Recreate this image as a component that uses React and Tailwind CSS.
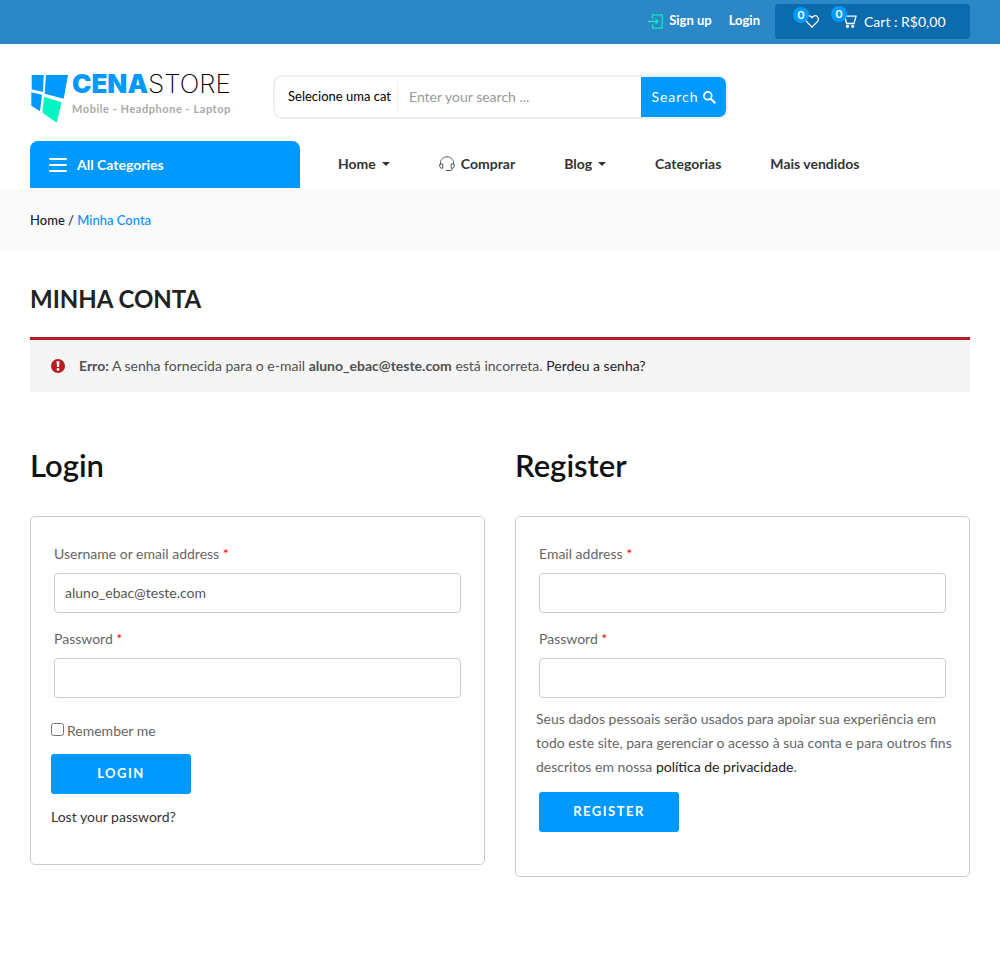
import { useState } from "react";

function LoginIcon() {
  return (
    <svg width="15" height="15" viewBox="0 0 15 15" fill="none" stroke="#14e6c0" strokeWidth="1.3" aria-hidden="true">
      <path d="M4.5 4.5V.8h9.7v13.4H4.5v-3.7" />
      <path d="M0 7.5h10M7.5 5l2.5 2.5L7.5 10" />
    </svg>
  );
}

function HeartIcon() {
  return (
    <svg width="14" height="13" viewBox="0 0 14 13" fill="none" stroke="white" strokeWidth="1.3" aria-hidden="true">
      <path d="M7 12 1.6 6.6C.2 5 .5 2.700 1.800 1.500 3.300.2 5.700.5 7 2.700 8.300.5 10.700.2 12.200 1.500c1.300 1.200 1.600 3.500.2 5.100Z" />
    </svg>
  );
}

function CartIcon() {
  return (
    <svg width="14" height="14" viewBox="0 0 14 14" fill="none" stroke="white" strokeWidth="1.3" aria-hidden="true">
      <path d="M2.500 2.200H13L11 9.500H3.500L1.500 1" />
      <circle cx="4.500" cy="12.300" r="1" fill="white" />
      <circle cx="9.700" cy="12.300" r="1" fill="white" />
    </svg>
  );
}

function HeadsetIcon() {
  return (
    <svg width="16" height="16" viewBox="0 0 16 16" fill="none" stroke="#444" strokeWidth=".9" aria-hidden="true">
      <path d="M1.500 8V6.800C1.500 3.500 4.300.8 8 .8s6.500 2.700 6.500 6V8" />
      <path d="M.8 8h3v4.200H2L.8 11ZM15.200 8h-3v4.200H14l1.200-1.200Z" />
      <path d="M13.500 12.500c0 1.300-.9 1.800-2.500 2M7 14.500h4" />
    </svg>
  );
}

function SearchIcon() {
  return (
    <svg width="13" height="13" viewBox="0 0 13 13" fill="none" stroke="white" strokeWidth="1.700" className="mt-[2px]" aria-hidden="true">
      <circle cx="4.800" cy="4.800" r="3.900" />
      <path d="m7.800 7.800 4.500 4.500" strokeWidth="2" />
    </svg>
  );
}

function Caret() {
  return (
    <svg width="8" height="4" viewBox="0 0 8 4" aria-hidden="true">
      <path d="M0 0h8L4 4Z" fill="#333" />
    </svg>
  );
}

function Badge({ children }) {
  return (
    <span className="absolute -top-2 -left-3 flex size-4 items-center justify-center rounded-full bg-[#0099ff] text-[12px] leading-4 font-bold text-white">
      {children}
    </span>
  );
}

function Logo() {
  return (
    <a href="#home" className="flex w-[243px] shrink-0 items-start gap-1">
      <svg width="38" height="49" viewBox="0 0 38 49" className="shrink-0" aria-hidden="true">
        <path d="M1.700 0H13.700L13 17 1.700 14.300Z" fill="#0099ff" />
        <path d="M16 0H38L33.700 23.700 14.700 18.700Z" fill="#0099ff" />
        <path d="M1.300 17.300 12 19.700 10 36.300 1.300 30.700Z" fill="#0099ff" />
        <path d="M14 21.700 31.500 27.300 26.700 47.700 12.500 37.700Z" fill="#00f5c0" />
      </svg>
      <span className="block">
        <span className="block font-['Inter',sans-serif] text-[26px] leading-[18px] text-black">
          <span className="font-black text-[#0099ff]">CENA</span>
          <span className="font-extralight">STORE</span>
        </span>
        <span className="mt-2 block text-[11px] leading-4 font-bold tracking-wider whitespace-nowrap text-[#aaa]">
          Mobile - Headphone - Laptop
        </span>
      </span>
    </a>
  );
}

function Field({ id, label, type, defaultValue }) {
  return (
    <div className="px-[3px]">
      <label htmlFor={id} className="block leading-6">
        {label} <span className="text-[#ff0000]">*</span>
      </label>
      <input
        id={id}
        type={type}
        defaultValue={defaultValue}
        className="mt-[7px] block h-10 w-full rounded-[4px] border border-[#ccc] bg-white px-[10px] pb-[2px] text-[#555] outline-none focus:border-[#0099ff]"
      />
    </div>
  );
}

const buttonClass =
  "h-10 w-[140px] rounded-[3px] bg-[#0099ff] text-[13px] font-bold tracking-[1.5px] text-white uppercase";

const navItems = [
  { label: "Home", caret: true },
  { label: "Comprar", icon: true },
  { label: "Blog", caret: true },
  { label: "Categorias" },
  { label: "Mais vendidos" },
];

export default function App() {
  const [remember, setRemember] = useState(false);
  const stop = (event) => event.preventDefault();

  return (
    <div className="min-h-screen bg-white font-['Lato',sans-serif] text-[14px] text-[#666]">
      <div className="bg-[#2b87c5]">
        <div className="mx-auto flex h-11 max-w-[1200px] items-center justify-end px-[30px] pb-[2px] text-[13px] font-bold text-white">
          <a href="#signup" className="flex items-center gap-[6px]">
            <LoginIcon />
            Sign up
          </a>
          <a href="#login" className="ml-[17px]">Login</a>
          <div className="ml-[15px] flex h-[35px] w-[195px] items-center rounded-[4px] bg-[#0b6bad] pl-[30px] text-[14px]">
            <a href="#wishlist" aria-label="Wishlist" className="relative">
              <HeartIcon />
              <Badge>0</Badge>
            </a>
            <a href="#cart" className="ml-[24px] flex items-center gap-[7px] font-normal">
              <span className="relative">
                <CartIcon />
                <Badge>0</Badge>
              </span>
              <span>Cart : R$0,00</span>
            </a>
          </div>
        </div>
      </div>

      <header className="mx-auto max-w-[1200px] px-[30px] pt-[31px] pb-px">
        <div className="flex items-start">
          <Logo />
          <form onSubmit={stop} className="flex h-[44px] w-full max-w-[455px] overflow-hidden rounded-[9px] border-2 border-[#eee]">
            <select
              aria-label="Category"
              className="my-1 w-[123px] shrink-0 appearance-none overflow-hidden border-r border-[#eee] bg-white pl-[13px] text-[13px] text-black outline-none"
            >
              <option>Selecione uma cat</option>
            </select>
            <input
              aria-label="Search"
              placeholder="Enter your search ..."
              className="min-w-0 flex-1 px-[11px] pb-[2px] outline-none placeholder:text-[#999]"
            />
            <button type="submit" className="flex w-[85px] shrink-0 items-center justify-center gap-1 bg-[#0099ff] pb-[2px] tracking-[1px] text-white">
              Search <SearchIcon />
            </button>
          </form>
        </div>
        <div className="mt-[17px] flex h-[47px] items-stretch">
          <button type="button" className="flex w-[270px] shrink-0 items-center gap-[10px] rounded-t-[8px] bg-[#0099ff] pl-[19px] font-bold text-white">
            <svg width="18" height="14" viewBox="0 0 18 14" stroke="white" strokeWidth="2" strokeLinecap="round" aria-hidden="true">
              <path d="M1 1h16M1 7h16M1 13h16" />
            </svg>
            All Categories
          </button>
          <nav className="ml-[38px] flex items-center gap-[49px] pb-[2px] font-bold text-[#333]">
            {navItems.map((item) => (
              <a key={item.label} href={`#${item.label}`} className="flex items-center gap-[6px] whitespace-nowrap">
                {item.icon && <HeadsetIcon />}
                {item.label}
                {item.caret && <Caret />}
              </a>
            ))}
          </nav>
        </div>
      </header>

      <div className="bg-[#fafafa]">
        <nav aria-label="Breadcrumb" className="mx-auto max-w-[1200px] px-[30px] py-[21px] text-[13px] leading-5 font-medium text-[#222]">
          <a href="#home">Home</a> / <span className="text-[#0a8fff]">Minha Conta</span>
        </nav>
      </div>

      <main className="mx-auto max-w-[1200px] px-[30px] pb-[78px]">
        <h1 className="pt-8 text-[24px] leading-8 font-bold text-[#222] uppercase">Minha Conta</h1>

        <div role="alert" className="mt-[22px] flex items-center gap-[14px] border-t-[3px] border-[#b81c23] bg-[#f5f5f5] px-[21px] py-[14px] leading-6 text-[#515151]">
          <svg width="14" height="14" viewBox="0 0 14 14" className="shrink-0" aria-hidden="true">
            <circle cx="7" cy="7" r="7" fill="#b81c23" />
            <path d="M5.500 2.200h3l-.5 5.800H6Z" fill="white" />
            <circle cx="7" cy="10.400" r="1.400" fill="white" />
          </svg>
          <p>
            <strong>Erro:</strong> A senha fornecida para o e-mail <strong>aluno_ebac@teste.com</strong> está incorreta.{" "}
            <a href="#recover" className="text-[#222]">Perdeu a senha?</a>
          </p>
        </div>

        <div className="mt-[53px] grid grid-cols-2 items-start gap-[30px]">
          <section>
            <h2 className="text-[31px] leading-10 font-semibold text-[#111]">Login</h2>
            <form onSubmit={stop} className="mt-[31px] rounded-[5px] border border-[#ccc] px-5 pt-[25px] pb-[35px]">
              <Field id="username" label="Username or email address" type="text" defaultValue="aluno_ebac@teste.com" />
              <div className="mt-[14px]">
                <Field id="login-password" label="Password" type="password" />
              </div>
              <label className="mt-[21px] flex items-center gap-[3px] leading-6">
                <input type="checkbox" checked={remember} onChange={(event) => setRemember(event.target.checked)} className="mb-[3px] size-[13px]" />
                Remember me
              </label>
              <button type="submit" className={`mt-[11px] block ${buttonClass}`}>Login</button>
              <p className="mt-[11px] leading-6">
                <a href="#recover" className="text-[#333]">Lost your password?</a>
              </p>
            </form>
          </section>

          <section>
            <h2 className="text-[31px] leading-10 font-semibold text-[#111]">Register</h2>
            <form onSubmit={stop} className="mt-[31px] rounded-[5px] border border-[#ccc] px-5 pt-[25px] pb-[44px]">
              <Field id="email" label="Email address" type="email" />
              <div className="mt-[14px]">
                <Field id="register-password" label="Password" type="password" />
              </div>
              <p className="-mr-4 mt-[9px] leading-6">
                Seus dados pessoais serão usados para apoiar sua experiência em todo este site, para gerenciar o acesso à sua conta e para outros fins descritos em nossa{" "}
                <a href="#privacy" className="text-[#222]">política de privacidade</a>.
              </p>
              <div className="mt-[13px] px-[3px]">
                <button type="submit" className={buttonClass}>Register</button>
              </div>
            </form>
          </section>
        </div>
      </main>
    </div>
  );
}
